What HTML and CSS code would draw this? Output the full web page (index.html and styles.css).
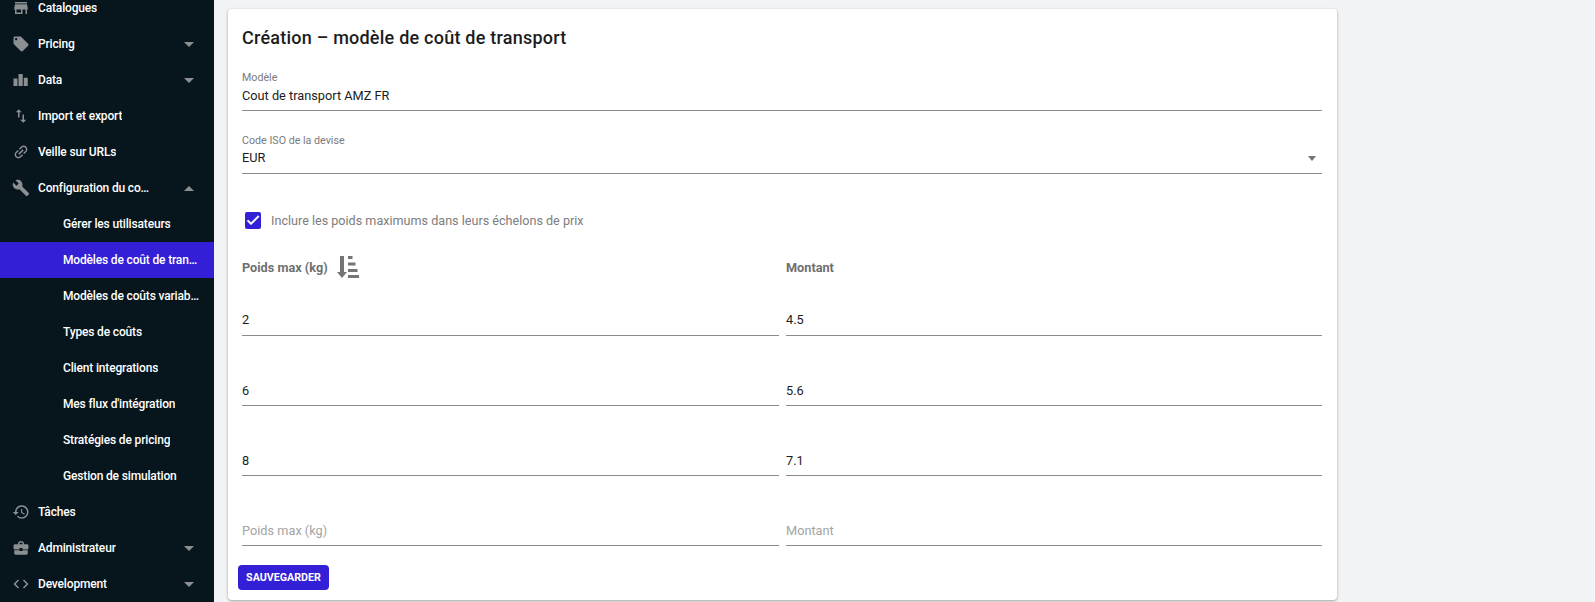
FILE: index.html
```html
<!DOCTYPE html>
<html lang="fr">
<head>
<meta charset="utf-8">
<title>Création – modèle de coût de transport</title>
<link rel="stylesheet" href="styles.css">
</head>
<body>
<div class="app">
  <nav class="sidebar">
    <a class="row"><svg class="ico" viewBox="0 0 24 24"><path d="M20 4H4v2h16V4zm1 10v-2l-1-5H4l-1 5v2h1v6h10v-6h4v6h2v-6h1zm-9 4H6v-4h6v4z"/></svg><span class="lbl">Catalogues</span></a>
    <a class="row"><svg class="ico" viewBox="0 0 24 24"><path d="M21.41 11.58l-9-9C12.05 2.22 11.55 2 11 2H4c-1.1 0-2 .9-2 2v7c0 .55.22 1.05.59 1.42l9 9c.36.36.86.58 1.41.58.55 0 1.05-.22 1.41-.59l7-7c.37-.36.59-.86.59-1.41 0-.55-.23-1.06-.59-1.42zM5.5 7C4.67 7 4 6.33 4 5.5S4.67 4 5.5 4 7 4.67 7 5.5 6.33 7 5.5 7z"/></svg><span class="lbl">Pricing</span><i class="caret"></i></a>
    <a class="row"><svg class="ico" viewBox="0 0 24 24"><path d="M2 20h5.300V10H2zM8.700 20h5.600V4H8.700zM15.700 20H21V9h-5.300z"/></svg><span class="lbl">Data</span><i class="caret"></i></a>
    <a class="row"><svg class="ico" viewBox="0 0 24 24"><path d="M9 3L5 6.99h3V14h2V6.99h3L9 3zm7 14.01V10h-2v7.01h-3L15 21l4-3.99h-3z"/></svg><span class="lbl">Import et export</span></a>
    <a class="row"><svg class="ico link" viewBox="0 0 24 24"><path d="M3.9 12c0-1.71 1.39-3.1 3.1-3.1h4V7H7c-2.76 0-5 2.24-5 5s2.24 5 5 5h4v-1.9H7c-1.71 0-3.1-1.39-3.1-3.1zM8 13h8v-2H8v2zm9-6h-4v1.9h4c1.71 0 3.1 1.39 3.1 3.1s-1.39 3.1-3.1 3.1h-4V17h4c2.76 0 5-2.24 5-5s-2.24-5-5-5z"/></svg><span class="lbl">Veille sur URLs</span></a>
    <a class="row"><svg class="ico" viewBox="0 0 24 24"><path d="M22.7 19l-9.1-9.1c.9-2.3.4-5-1.5-6.9-2-2-5-2.4-7.4-1.3L9 6 6 9 1.6 4.7C.4 7.1.9 10.1 2.9 12.1c1.9 1.9 4.6 2.4 6.9 1.5l9.1 9.1c.4.4 1 .4 1.4 0l2.3-2.3c.5-.4.5-1.1.1-1.4z"/></svg><span class="lbl">Configuration du contexte</span><i class="caret up"></i></a>
    <a class="row sub"><span class="lbl">Gérer les utilisateurs</span></a>
    <a class="row sub active"><span class="lbl">Modèles de coût de transport</span></a>
    <a class="row sub"><span class="lbl">Modèles de coûts variables</span></a>
    <a class="row sub"><span class="lbl">Types de coûts</span></a>
    <a class="row sub"><span class="lbl">Client integrations</span></a>
    <a class="row sub"><span class="lbl">Mes flux d'intégration</span></a>
    <a class="row sub"><span class="lbl">Stratégies de pricing</span></a>
    <a class="row sub"><span class="lbl">Gestion de simulation</span></a>
    <a class="row"><svg class="ico" viewBox="0 0 24 24"><path d="M13 3c-4.97 0-9 4.03-9 9H1l3.89 3.89.07.14L9 12H6c0-3.87 3.13-7 7-7s7 3.13 7 7-3.13 7-7 7c-1.93 0-3.68-.79-4.94-2.06l-1.42 1.42C8.27 19.99 10.51 21 13 21c4.97 0 9-4.03 9-9s-4.03-9-9-9zm-1 5v5l4.28 2.54.72-1.21-3.5-2.08V8H12z"/></svg><span class="lbl">Tâches</span></a>
    <a class="row"><svg class="ico" viewBox="0 0 24 24"><path d="M10 16v-1H3.01L3 19c0 1.11.89 2 2 2h14c1.11 0 2-.89 2-2v-4h-7v1h-4zm10-9h-4.01V5l-2-2h-4l-2 2v2H4c-1.1 0-2 .9-2 2v3c0 1.11.89 2 2 2h6v-2h4v2h6c1.1 0 2-.9 2-2V9c0-1.1-.9-2-2-2zm-6 0h-4V5h4v2z"/></svg><span class="lbl">Administrateur</span><i class="caret"></i></a>
    <a class="row"><svg class="ico" viewBox="0 0 24 24"><path d="M9.4 16.6L4.8 12l4.6-4.6L8 6l-6 6 6 6 1.4-1.4zm5.2 0l4.6-4.6-4.6-4.6L16 6l6 6-6 6-1.4-1.4z"/></svg><span class="lbl">Development</span><i class="caret"></i></a>
  </nav>
  <main class="main">
    <section class="card">
      <h1 class="title">Création – modèle de coût de transport</h1>
      <div class="field first">
        <label class="flabel">Modèle</label>
        <div class="fvalue">Cout de transport AMZ FR</div>
      </div>
      <div class="field second">
        <label class="flabel">Code ISO de la devise</label>
        <div class="fvalue selectval">EUR<i class="selcaret"></i></div>
      </div>
      <div class="check">
        <span class="box"><svg viewBox="0 0 24 24"><path d="M9 16.2L4.8 12l-1.4 1.4L9 19 21 7l-1.4-1.4L9 16.2z"/></svg></span>
        <span class="checktxt">Inclure les poids maximums dans leurs échelons de prix</span>
      </div>
      <div class="grid">
        <div class="th">Poids max (kg)<svg class="sort" viewBox="0 0 22 22"><path d="M3 0h4v16h3l-5 6-5-6h3zM11 0h4.500v3H11zM11 6.500h7.500v3H11zM11 13h9.500v3H11zM11 19h11v3H11z"/></svg></div>
        <div class="th">Montant</div>
        <div class="cell top">2</div><div class="cell top">4.5</div>
        <div class="cell">6</div><div class="cell">5.6</div>
        <div class="cell">8</div><div class="cell">7.1</div>
        <div class="cell ph">Poids max (kg)</div><div class="cell ph">Montant</div>
      </div>
      <button class="save">SAUVEGARDER</button>
    </section>
  </main>
</div>
</body>
</html>
```
FILE: styles.css
```css
* { box-sizing: border-box; }
html, body { margin: 0; height: 100%; overflow: hidden; }
body { font-family: Roboto, "Liberation Sans", sans-serif; background: #f2f3f5; color: #1c1c1c; }
.app { display: flex; height: 602px; overflow: hidden; }
.sidebar { width: 214px; flex: none; height: 602px; background: #07161c; display: flex; flex-direction: column; justify-content: flex-end; overflow: hidden; }
.row { flex: none; height: 36px; display: flex; align-items: center; padding-left: 12px; color: #fff; font-size: 12px; letter-spacing: -.16px; font-weight: 500; position: relative; }
.ico { width: 18px; height: 18px; fill: #8b8f91; flex: none; margin-right: 8px; }
.ico.link { transform: rotate(-45deg); }
.lbl { white-space: nowrap; overflow: hidden; text-overflow: ellipsis; max-width: 114px; }
.row.sub { padding-left: 63px; }
.row.sub .lbl { max-width: 137px; }
.row.active { background: #331fd6; }
.caret { position: absolute; left: 184px; top: 16px; border-left: 5px solid transparent; border-right: 5px solid transparent; border-top: 5px solid #8b8f91; }
.caret.up { border-top: 0; border-bottom: 5px solid #8b8f91; }
.main { flex: 1; padding: 9px 0 0 14px; min-width: 0; }
.card { width: 1109px; height: 591px; background: #fff; border-radius: 4px; box-shadow: 0 1px 3px rgba(0,0,0,.35); padding: 0 15px 0 14px; }
.title { margin: 0; padding-top: 18px; font-size: 18px; font-weight: 500; line-height: 22px; letter-spacing: .23px; color: #1c1c1c; }
.field { border-bottom: 1px solid #8c8c8c; height: 39px; margin-top: 24px; }
.field.first { margin-top: 23px; }
.flabel { display: block; font-size: 10.7px; line-height: 12px; color: #7a7a7a; }
.fvalue { font-size: 12.75px; line-height: 16px; margin-top: 4px; color: #1c1c1c; position: relative; }
.second .fvalue { margin-top: 3px; }
.selcaret { position: absolute; right: 6px; top: 6px; border-left: 4.500px solid transparent; border-right: 4.500px solid transparent; border-top: 5px solid #757575; }
.check { display: flex; align-items: center; margin-top: 37px; height: 18px; padding-left: 3px; }
.box { width: 16px; height: 17px; background: #331fd6; border-radius: 2px; display: flex; align-items: center; justify-content: center; margin-right: 10px; }
.box svg { width: 16px; height: 16px; fill: #fff; stroke: #fff; stroke-width: 1.2px; }
.checktxt { font-size: 12.6px; color: #7d7d7d; }
.grid { display: grid; grid-template-columns: 537px 536px; grid-template-rows: 30px 54px 70px 70px 70px; column-gap: 7px; margin-top: 23px; }
.th { font-size: 12.7px; font-weight: 700; color: #6f6f6f; display: flex; align-items: center; }
.sort { width: 22px; height: 22px; fill: #757575; margin-left: 9px; flex: none; }
.cell { display: flex; align-items: flex-end; border-bottom: 1px solid #8c8c8c; font-size: 12.75px; line-height: 16px; padding-bottom: 6px; color: #1c1c1c; }
.cell.top { padding-bottom: 7px; }
.cell.ph { color: #a4a4a4; }
.save { display: block; margin: 19px 0 0 -4px; width: 91px; height: 25px; border: 0; padding: 0; border-radius: 4px; background: #331fd6; color: #fff; font-family: inherit; font-size: 10.7px; font-weight: 700; }
```
